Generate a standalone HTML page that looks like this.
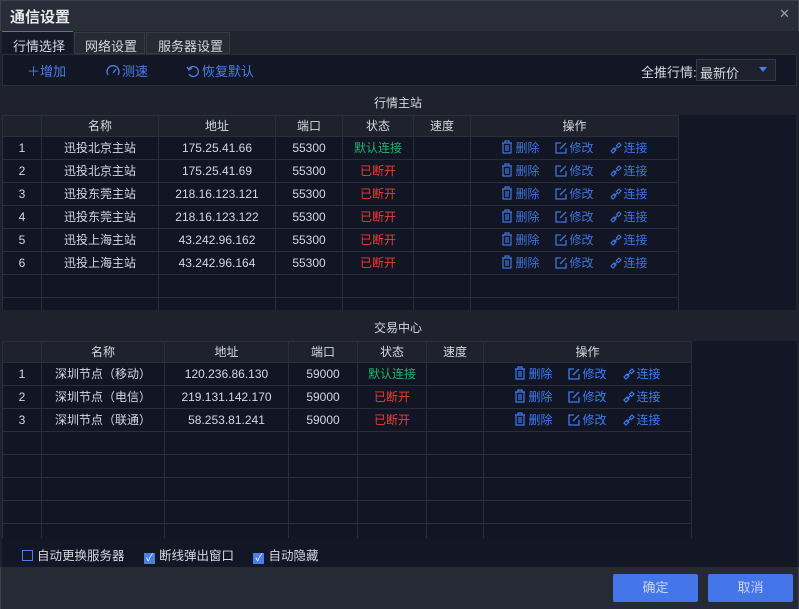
<!DOCTYPE html><html><head><meta charset="utf-8"><style>
*{margin:0;padding:0;box-sizing:border-box}
body{width:799px;height:609px;background:#1f222d;font-family:"Liberation Sans","Noto Sans CJK SC",sans-serif;font-size:12px;color:#d4d8e0;position:relative;overflow:hidden}
.a{position:absolute}
table{border-collapse:collapse;table-layout:fixed;position:absolute}
td{border:1px solid #2a2e3b;text-align:center;height:23px;padding:0;background:#121524;white-space:nowrap;overflow:hidden;line-height:20px}
tr.h td{background:#1f222d;height:21px}
.g{color:#1db46a}.r{color:#f03a32}
.op{color:#3f74dc}
.op2{color:#3b7cf5}
.op span,.op2 span{margin:0 8px}
svg{vertical-align:-2px;margin-right:2px}
.cb{display:inline-block;width:11px;height:11px;vertical-align:-1px;margin-right:4px}
</style></head><body>
<div class="a" style="left:0;top:0;width:799px;height:31px;background:#2a2d38;border:1px solid #3a4050;border-bottom:none"></div>
<div class="a" style="left:10px;top:6px;font-size:15px;font-weight:bold;color:#e6e8ee">通信设置</div>
<div class="a" style="left:779px;top:6px;font-size:13px;color:#9aa0aa">✕</div>
<div class="a" style="left:0;top:31px;width:799px;height:23px;background:#22252f"></div>
<div class="a" style="left:2px;top:31px;width:71px;height:24px;background:#151826;border-top:1px solid #3f74dc;padding:4px 0 0 11px;font-size:13px">行情选择</div>
<div class="a" style="left:74px;top:32px;width:71px;height:22px;background:#262a33;border:1px solid #353944;padding:3px 0 0 10px;font-size:13px">网络设置</div>
<div class="a" style="left:146px;top:32px;width:84px;height:22px;background:#262a33;border:1px solid #353944;padding:3px 0 0 11px;font-size:13px">服务器设置</div>
<div class="a" style="left:2px;top:54px;width:795px;height:32px;background:#131624;border:1px solid #2a2e3b"></div>
<div class="a" style="left:27px;top:61px;font-size:13px;color:#4a7ee8">＋增加</div>
<div class="a" style="left:106px;top:61px;font-size:13px;color:#4a7ee8"><svg width="14" height="14" viewBox="0 0 14 14"><path d="M2 11A6 6 0 1 1 12 11" fill="none" stroke="#4a7ee8" stroke-width="1.3"/><path d="M7 9L10 5" stroke="#4a7ee8" stroke-width="1.3"/></svg>测速</div>
<div class="a" style="left:186px;top:61px;font-size:13px;color:#4a7ee8"><svg width="14" height="14" viewBox="0 0 14 14"><path d="M3 5A5 5 0 1 1 3 10" fill="none" stroke="#4a7ee8" stroke-width="1.3"/><path d="M1 3L3 6L6 4" fill="none" stroke="#4a7ee8" stroke-width="1.3"/></svg>恢复默认</div>
<div class="a" style="left:641px;top:62px;font-size:13px">全推行情:</div>
<div class="a" style="left:696px;top:59px;width:80px;height:22px;background:#1e212c;border:1px solid #353a46;padding:3px 0 0 3px;font-size:13px">最新价<span style="position:absolute;right:8px;top:7px;border:4px solid transparent;border-top:5px solid #4a7ee8"></span></div>
<div class="a" style="left:2px;top:87px;width:795px;height:224px;background:#1f222d"></div>
<div class="a" style="left:374px;top:94px;font-size:12px">行情主站</div>
<div class="a" style="left:678px;top:115px;width:118px;height:195px;background:#131624"></div>
<table style="left:2px;top:115px;width:676px">
<colgroup><col width="39"><col width="117"><col width="117"><col width="67"><col width="71"><col width="57"><col width="208"></colgroup>
<tr class="h"><td></td><td>名称</td><td>地址</td><td>端口</td><td>状态</td><td>速度</td><td>操作</td></tr>
<tr><td>1</td><td>迅投北京主站</td><td>175.25.41.66</td><td>55300</td><td class="g">默认连接</td><td></td><td class="op">OPS</td></tr>
<tr><td>2</td><td>迅投北京主站</td><td>175.25.41.69</td><td>55300</td><td class="r">已断开</td><td></td><td class="op">OPS</td></tr>
<tr><td>3</td><td>迅投东莞主站</td><td>218.16.123.121</td><td>55300</td><td class="r">已断开</td><td></td><td class="op">OPS</td></tr>
<tr><td>4</td><td>迅投东莞主站</td><td>218.16.123.122</td><td>55300</td><td class="r">已断开</td><td></td><td class="op">OPS</td></tr>
<tr><td>5</td><td>迅投上海主站</td><td>43.242.96.162</td><td>55300</td><td class="r">已断开</td><td></td><td class="op">OPS</td></tr>
<tr><td>6</td><td>迅投上海主站</td><td>43.242.96.164</td><td>55300</td><td class="r">已断开</td><td></td><td class="op">OPS</td></tr>
<tr><td></td><td></td><td></td><td></td><td></td><td></td><td></td></tr>
<tr><td style="height:12px"></td><td></td><td></td><td></td><td></td><td></td><td></td></tr>
</table>
<div class="a" style="left:2px;top:310px;width:795px;height:31px;background:#1f222d"></div>
<div class="a" style="left:374px;top:319px;font-size:12px">交易中心</div>
<div class="a" style="left:691px;top:341px;width:106px;height:197px;background:#131624"></div>
<table style="left:2px;top:341px;width:689px">
<colgroup><col width="39"><col width="123"><col width="124"><col width="69"><col width="69"><col width="57"><col width="208"></colgroup>
<tr class="h"><td></td><td>名称</td><td>地址</td><td>端口</td><td>状态</td><td>速度</td><td>操作</td></tr>
<tr><td>1</td><td>深圳节点（移动）</td><td>120.236.86.130</td><td>59000</td><td class="g">默认连接</td><td></td><td class="op2">OPS</td></tr>
<tr><td>2</td><td>深圳节点（电信）</td><td>219.131.142.170</td><td>59000</td><td class="r">已断开</td><td></td><td class="op2">OPS</td></tr>
<tr><td>3</td><td>深圳节点（联通）</td><td>58.253.81.241</td><td>59000</td><td class="r">已断开</td><td></td><td class="op2">OPS</td></tr>
<tr><td></td><td></td><td></td><td></td><td></td><td></td><td></td></tr>
<tr><td></td><td></td><td></td><td></td><td></td><td></td><td></td></tr>
<tr><td></td><td></td><td></td><td></td><td></td><td></td><td></td></tr>
<tr><td></td><td></td><td></td><td></td><td></td><td></td><td></td></tr>
<tr><td style="height:14px"></td><td></td><td></td><td></td><td></td><td></td><td></td></tr>
</table>
<div class="a" style="left:2px;top:538px;width:795px;height:29px;background:#131624"></div>
<div class="a" style="left:22px;top:545px;font-size:12.5px">
<span class="cb" style="border:1px solid #4a7ee8"></span>自动更换服务器
<span class="cb" style="background:#4a7ee8;margin-left:16px;color:#fff;font-size:10px;line-height:11px;text-align:center">✓</span>断线弹出窗口
<span class="cb" style="background:#4a7ee8;margin-left:16px;color:#fff;font-size:10px;line-height:11px;text-align:center">✓</span>自动隐藏</div>
<div class="a" style="left:0;top:567px;width:799px;height:42px;background:#262a35;border-left:1px solid #3a4050;border-right:1px solid #3a4050"></div>
<div class="a" style="left:613px;top:574px;width:85px;height:28px;background:#4476ea;border-radius:2px;text-align:center;line-height:28px;font-size:13px;color:#cdd4e4">确定</div>
<div class="a" style="left:708px;top:574px;width:85px;height:28px;background:#4476ea;border-radius:2px;text-align:center;line-height:28px;font-size:13px;color:#cdd4e4">取消</div>
<script>
var ops='<span><svg width="12" height="14" viewBox="0 0 12 14"><path d="M1 3H11M4 3V1H8V3M2 3V13H10V3M5 5V11M7 5V11" fill="none" stroke="currentColor" stroke-width="1.2"/></svg>删除</span><span><svg width="12" height="12" viewBox="0 0 12 12"><path d="M6 1H1V11H11V6M5 7L11 1" fill="none" stroke="currentColor" stroke-width="1.3"/></svg>修改</span><span><svg width="12" height="12" viewBox="0 0 12 12"><path d="M1 9L4 6L6 8L3 11ZM6 4L9 1L11 3L8 6M4 8L8 4" fill="none" stroke="currentColor" stroke-width="1.2"/></svg>连接</span>';
document.querySelectorAll('.op,.op2').forEach(function(e){e.innerHTML=ops});
</script>
</body></html>
